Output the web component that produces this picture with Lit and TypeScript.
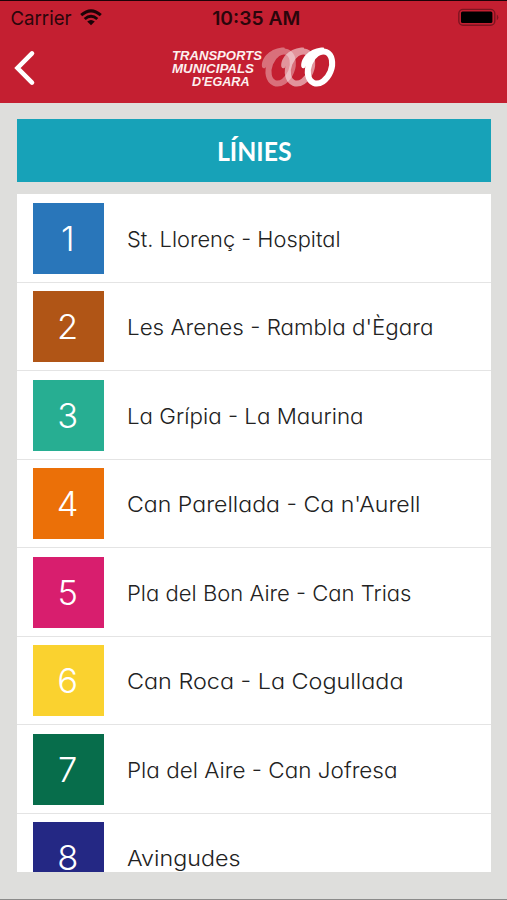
import { LitElement, html, svg, css } from "lit";
import { customElement } from "lit/decorators.js";

interface Line {
  number: number;
  name: string;
  color: string;
  length: number;
}

const LINES: Line[] = [
  { number: 1, name: "St. Llorenç - Hospital", color: "#2976ba", length: 213.5 },
  { number: 2, name: "Les Arenes - Rambla d'Ègara", color: "#b05516", length: 306.5 },
  { number: 3, name: "La Grípia - La Maurina", color: "#27ae92", length: 236.5 },
  { number: 4, name: "Can Parellada - Ca n'Aurell", color: "#eb7008", length: 293.5 },
  { number: 5, name: "Pla del Bon Aire - Can Trias", color: "#d81e6e", length: 284.5 },
  { number: 6, name: "Can Roca - La Cogullada", color: "#fad22f", length: 276.5 },
  { number: 7, name: "Pla del Aire - Can Jofresa", color: "#076d4b", length: 270.5 },
  { number: 8, name: "Avingudes", color: "#242884", length: 113.5 },
];

@customElement("app-root")
export class AppRoot extends LitElement {
  static styles = css`
    :host {
      display: flex;
      flex-direction: column;
      box-sizing: border-box;
      height: 900px;
      overflow: hidden;
      background: #dededc;
      border-bottom: 1px solid #8b8b8a;
      font-family: Inter, "Liberation Sans", sans-serif;
    }
    svg { display: block; overflow: visible; }
    .top {
      box-sizing: border-box;
      height: 102.5px;
      flex: none;
      background: #c41f31;
      border-top: 1.5px solid #1c0207;
    }
    .status, .nav {
      display: grid;
      grid-template-columns: 1fr auto 1fr;
      align-items: center;
    }
    .status { height: 33px; padding: 0 8px 0 11px; }
    .nav { height: 68px; padding: 0 14px; }
    .left { display: flex; align-items: center; gap: 8px; }
    .right { justify-self: end; }
    .status text { font-size: 19px; fill: #2a060b; }
    .status .time { font-weight: 600; font-size: 18.7px; }
    .logo text {
      font: italic bold 12.4px "Liberation Sans", sans-serif;
      fill: #fdf0ef;
    }
    .title {
      flex: none;
      height: 63px;
      margin: 16.5px 16px 12.3px 17px;
      background: #17a2b8;
      display: flex;
      justify-content: center;
    }
    .title text { font: 700 27px Lato, sans-serif; fill: #fff; }
    .list {
      flex: none;
      height: 677.4px;
      margin: 0 16px 0 17px;
      background: #fff;
      overflow: hidden;
    }
    .row {
      box-sizing: border-box;
      height: 88.5px;
      padding: 8.3px 0 0 15.5px;
      display: flex;
      gap: 23.5px;
      border-bottom: 1px solid #e4e4e4;
    }
    .badge { width: 71px; height: 71px; flex: none; }
    .badge text { font-size: 34.5px; font-weight: 350; fill: #fff; text-anchor: middle; }
    .name text {
      font-size: 22px;
      font-weight: 350;
      font-feature-settings: "cv11";
      fill: #222;
    }
  `;

  private row(line: Line) {
    return html`<div class="row">
      <div class="badge" style="background:${line.color}">
        <svg width="71" height="71"><text x="34.7" y="47.6">${line.number}</text></svg>
      </div>
      <svg class="name" width=${line.length} height="71">
        <text x="0" y="44.2" textLength=${line.length} lengthAdjust="spacingAndGlyphs">${line.name}</text>
      </svg>
    </div>`;
  }

  private ring(dx: number, opacity: number) {
    return svg`<g transform="translate(84 -7.5) scale(.3333) translate(${dx} 0)" opacity=${opacity}>
      <ellipse cx="195" cy="84" rx="34" ry="50" transform="rotate(22 195 84)" fill="none" stroke="#fff" stroke-width="18"/>
      <path fill="#fff" d="M139 82C136 54 166 24 206 24L212 40C194 42 176 54 166 72Q158 70 150 84Q143 90 139 82Z"/>
    </g>`;
  }

  render() {
    return html`
      <header class="top">
        <div class="status">
          <div class="left">
            <svg width="61" height="33"><text x="-0.5" y="23.5" textLength="61" lengthAdjust="spacingAndGlyphs">Carrier</text></svg>
            <svg width="22" height="17" viewBox="0 0 22 17">
              <g fill="none" stroke="#1c0307" stroke-width="3">
                <path d="M1.2 6.2Q11 -2.4 20.8 6.2"/>
                <path d="M4.7 10Q11 4.4 17.3 10"/>
              </g>
              <path fill="#1c0307" d="M7.2 12.4Q11 9.4 14.8 12.4L11 16.3Z"/>
            </svg>
          </div>
          <svg width="88" height="33"><text class="time" x="1.2" y="23.5" textLength="88" lengthAdjust="spacingAndGlyphs">10:35 AM</text></svg>
          <svg class="right" width="41" height="17" viewBox="0 0 41 17">
            <rect x="0.8" y="0.4" width="36" height="15.8" rx="4.2" fill="none" stroke="#7d1420" stroke-width="1.4"/>
            <rect x="3" y="2.6" width="31.4" height="11.4" rx="1.5" fill="#000"/>
            <path d="M38.8 5.6v5.6q1.6-1 1.6-2.8t-1.6-2.8Z" fill="#7d1420"/>
          </svg>
        </div>
        <div class="nav">
          <svg width="22" height="36" viewBox="0 0 22 36">
            <path d="M18 3.4L3.5 18L18 32.6" fill="none" stroke="#fff" stroke-width="4.6" stroke-linecap="round"/>
          </svg>
          <svg class="logo" width="165" height="42">
            <text x="1" y="13.4" textLength="90" lengthAdjust="spacingAndGlyphs">TRANSPORTS</text>
            <text x="1" y="26.1" textLength="82" lengthAdjust="spacingAndGlyphs">MUNICIPALS</text>
            <text x="21" y="38.8" textLength="57.5" lengthAdjust="spacingAndGlyphs">D'EGARA</text>
            ${this.ring(-118, 0.36)}${this.ring(-60, 0.52)}${this.ring(0, 1)}
          </svg>
        </div>
      </header>
      <div class="title">
        <svg width="75" height="63"><text x="0" y="42.3" textLength="74.5" lengthAdjust="spacingAndGlyphs">LÍNIES</text></svg>
      </div>
      <main class="list">${LINES.map((line) => this.row(line))}</main>
    `;
  }
}
